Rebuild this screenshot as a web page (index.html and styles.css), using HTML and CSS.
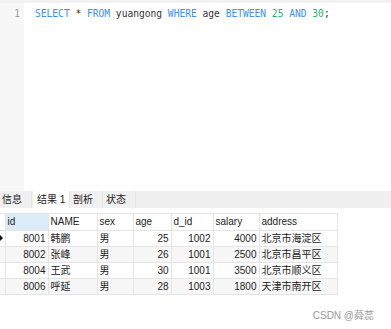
FILE: index.html
```html
<!DOCTYPE html>
<html>
<head>
<meta charset="utf-8">
<link rel="stylesheet" href="styles.css">
</head>
<body>
<div class="page">
  <div class="editor">
    <div class="gutter"><span class="ln">1</span></div>
    <div class="code"><span class="kw">SELECT</span> * <span class="kw">FROM</span> yuangong <span class="kw">WHERE</span> age <span class="kw">BETWEEN</span> <span class="num">25</span> <span class="kw">AND</span> <span class="num">30</span>;</div>
  </div>
  <div class="tabs">
    <div class="tab">信息</div>
    <div class="tab active">结果 1</div>
    <div class="tab">剖析</div>
    <div class="tab">状态</div>
  </div>
  <table class="grid">
    <colgroup>
      <col class="c-ind"><col class="c-id"><col class="c-name"><col class="c-sex"><col class="c-age"><col class="c-did"><col class="c-sal"><col class="c-addr">
    </colgroup>
    <thead>
      <tr><th class="ind"></th><th class="sel">id</th><th>NAME</th><th>sex</th><th>age</th><th>d_id</th><th>salary</th><th>address</th></tr>
    </thead>
    <tbody>
      <tr><td class="ind"><span class="arrow"></span></td><td class="r">8001</td><td>韩鹏</td><td>男</td><td class="r">25</td><td class="r">1002</td><td class="r">4000</td><td>北京市海淀区</td></tr>
      <tr class="alt"><td class="ind"></td><td class="r">8002</td><td>张峰</td><td>男</td><td class="r">26</td><td class="r">1001</td><td class="r">2500</td><td>北京市昌平区</td></tr>
      <tr><td class="ind"></td><td class="r">8004</td><td>王武</td><td>男</td><td class="r">30</td><td class="r">1001</td><td class="r">3500</td><td>北京市顺义区</td></tr>
      <tr class="alt"><td class="ind"></td><td class="r">8006</td><td>呼延</td><td>男</td><td class="r">28</td><td class="r">1003</td><td class="r">1800</td><td>天津市南开区</td></tr>
    </tbody>
  </table>
  <div class="footer">CSDN @蕣蕊</div>
</div>
</body>
</html>
```

FILE: styles.css
```css
html, body {
  margin: 0;
  padding: 0;
  background: #ffffff;
}
.page {
  width: 391px;
  height: 329px;
  overflow: hidden;
  font-family: "Liberation Sans", "Noto Sans CJK SC", sans-serif;
  color: #222;
}
.editor {
  display: flex;
  height: 188px;
  border-top: 3px solid #f2f2f2;
}
.gutter {
  width: 24px;
  background: #f7f7f7;
  display: flex;
  justify-content: flex-end;
  padding-right: 4px;
  box-sizing: border-box;
}
.ln {
  font-family: "DejaVu Sans Mono", monospace;
  font-size: 9.6px;
  color: #999;
  line-height: 14px;
  margin-top: 4px;
}
.code {
  padding-left: 11px;
  padding-top: 4px;
  font-family: "DejaVu Sans Mono", monospace;
  font-size: 9.6px;
  line-height: 14px;
  color: #333;
  white-space: pre;
}
.kw { color: #3b8ff0; }
.num { color: #22b36b; }
.tabs {
  display: flex;
  height: 17px;
  background: #f0f0f0;
  padding-left: 0;
  gap: 1px;
}
.tab {
  font-size: 10px;
  line-height: 17px;
  padding: 0 3px 0 2px;
  width: 26px;
  color: #222;
  border-right: 1px solid #e6e6e6;
}
.tab.active {
  background: #ffffff;
  width: 29px;
  padding-left: 4px;
}
.grid {
  border-collapse: collapse;
  table-layout: fixed;
  width: 337px;
  margin-top: 5px;
  font-size: 10px;
}
.c-ind { width: 5px; }
.c-id { width: 43px; }
.c-name { width: 49px; }
.c-sex { width: 36px; }
.c-age { width: 38px; }
.c-did { width: 42px; }
.c-sal { width: 46px; }
.c-addr { width: 78px; }
.grid th, .grid td {
  height: 15px;
  padding: 0 2px;
  border: 1px solid #e4e4e4;
  text-align: left;
  font-weight: normal;
  white-space: nowrap;
  overflow: hidden;
  line-height: 15px;
}
.grid th {
  height: 16px;
  line-height: 16px;
}
.grid th.ind, .grid td.ind {
  padding: 0;
  border-left: none;
  position: relative;
}
.grid th.sel {
  background: #dcebf8;
}
.grid td.r {
  text-align: right;
}
.grid tr.alt td {
  background: #f7f7f7;
}
.arrow {
  position: absolute;
  left: 0;
  top: 4px;
  width: 0;
  height: 0;
  border-top: 3px solid transparent;
  border-bottom: 3px solid transparent;
  border-left: 3px solid #111;
}
.footer {
  text-align: right;
  font-size: 10px;
  color: #999;
  padding-right: 17px;
  margin-top: 12px;
}
```
